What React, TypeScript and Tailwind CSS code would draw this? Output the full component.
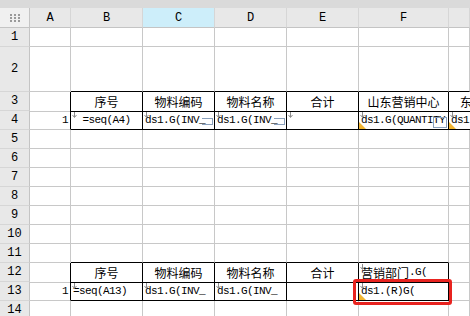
import React from "react";

const GRID = "grid grid-cols-[30px_41px_72px_72px_72px_72px_90px_1fr]";
const MONO = "font-['Liberation_Mono',monospace] text-[11px] tracking-[-0.6px] text-black";
const CJK = "font-['Noto_Sans_CJK_SC',sans-serif] text-[12px] text-black";

type CellProps = {
    children?: React.ReactNode;
    r?: boolean;
    b?: boolean;
    align?: "left" | "center" | "right";
    arrow?: boolean;
    tri?: boolean;
    box?: "sm" | "lg";
    red?: boolean;
};

function Arrow() {
    return (
        <svg className="absolute left-[1px] top-[1px]" width="5" height="6" viewBox="0 0 5 6">
            <line x1="2.5" y1="0" x2="2.5" y2="5" stroke="#8c8c8c" strokeWidth="1" />
            <path d="M0.5 3 L2.5 5.5 L4.5 3" fill="none" stroke="#8c8c8c" strokeWidth="1" />
        </svg>
    );
}

function Cell({ children, r, b, align = "left", arrow, tri, box, red }: CellProps) {
    const justify =
        align === "center" ? "justify-center" : align === "right" ? "justify-end" : "justify-start";
    return (
        <div
            className={`relative flex items-center border-r border-b ${justify} ${
                r ? "border-r-black" : "border-r-[#c8c8c8]"
            } ${b ? "border-b-black" : "border-b-[#c8c8c8]"}`}
        >
            <div className={`flex w-full overflow-hidden whitespace-nowrap px-[2px] pt-[1px] ${justify}`}>
                {children}
            </div>
            {arrow && <Arrow />}
            {tri && (
                <div className="absolute bottom-0 left-0 h-0 w-0 border-t-[7px] border-r-[7px] border-t-transparent border-r-transparent border-b-0 border-l-[7px] border-l-[#f2b632]" />
            )}
            {box === "sm" && (
                <div className="absolute bottom-[4px] right-[1px] h-[7px] w-[11px] border border-[#8aa0bc] border-l-0" />
            )}
            {box === "lg" && (
                <div className="absolute bottom-[1px] right-[1px] h-[11px] w-[14px] border border-[#8aa0bc]" />
            )}
            {red && (
                <div className="absolute left-[-6px] top-[-3px] z-10 h-[26px] w-[99px] rounded-[3px] border-[3px] border-[#e8231f]" />
            )}
        </div>
    );
}

function RowHead({ n, h }: { n: number; h: string }) {
    return (
        <div
            className={`${h} flex items-center justify-center border-r border-b border-r-[#c4c4c4] border-b-[#d6d6d6] bg-[#e8e8e8] font-['Liberation_Mono',monospace] text-[12px] text-black`}
        >
            {n}
        </div>
    );
}

const Mono = ({ t }: { t: string }) => <span className={MONO}>{t}</span>;
const Zh = ({ t }: { t: string }) => <span className={CJK}>{t}</span>;

export default function App() {
    const letters = ["A", "B", "C", "D", "E", "F", ""];
    const blank = (n: number, tableBottom = false, cols = 6) => (
        <div className={`${GRID} h-[19px]`} key={n}>
            <RowHead n={n} h="h-[19px]" />
            <Cell />
            {[0, 1, 2, 3, 4, 5].map((i) => (
                <Cell key={i} b={tableBottom && i < cols} />
            ))}
        </div>
    );

    return (
        <div className="h-[316px] w-[470px] overflow-hidden bg-white">
            <div className="h-[8px] bg-[#dadada]" />

            {/* column header */}
            <div className={`${GRID} h-[20px]`}>
                <div className="flex items-center justify-center border-r border-b border-r-[#c4c4c4] border-b-[#c4c4c4] bg-[#f0f0f0]">
                    <svg width="10" height="8" viewBox="0 0 10 8">
                        {[0, 1, 2].map((y) =>
                            [0, 1, 2].map((x) => (
                                <rect key={`${x}${y}`} x={x * 4} y={y * 3} width="2" height="2" fill="#9a9a9a" />
                            ))
                        )}
                    </svg>
                </div>
                {letters.map((l, i) => (
                    <div
                        key={i}
                        className={`flex items-center justify-center border-r border-b border-r-[#d6d6d6] border-b-[#c4c4c4] font-['Liberation_Mono',monospace] text-[12px] text-black ${
                            l === "C" ? "bg-[#cdeefa]" : "bg-[#e8e8e8]"
                        }`}
                    >
                        {l}
                    </div>
                ))}
            </div>

            {blank(1)}

            <div className={`${GRID} h-[45px]`}>
                <RowHead n={2} h="h-[45px]" />
                <Cell />
                {[0, 1, 2, 3, 4, 5].map((i) => (
                    <Cell key={i} b />
                ))}
            </div>

            {/* row 3 */}
            <div className={`${GRID} h-[19px]`}>
                <RowHead n={3} h="h-[19px]" />
                <Cell r />
                <Cell r b align="center"><Zh t="序号" /></Cell>
                <Cell r b align="center"><Zh t="物料编码" /></Cell>
                <Cell r b align="center"><Zh t="物料名称" /></Cell>
                <Cell r b align="center"><Zh t="合计" /></Cell>
                <Cell r b align="center"><Zh t="山东营销中心" /></Cell>
                <Cell b><span className={`${CJK} pl-[9px]`}>东营销中心</span></Cell>
            </div>

            {/* row 4 */}
            <div className={`${GRID} h-[19px]`}>
                <RowHead n={4} h="h-[19px]" />
                <Cell r align="right"><Mono t="1" /></Cell>
                <Cell r b align="center" arrow><Mono t="=seq(A4)" /></Cell>
                <Cell r b arrow box="sm"><Mono t="ds1.G(INV_" /></Cell>
                <Cell r b arrow box="sm"><Mono t="ds1.G(INV_" /></Cell>
                <Cell r b arrow />
                <Cell r b arrow tri box="lg"><Mono t="ds1.G(QUANTITY" /></Cell>
                <Cell b arrow tri><Mono t="ds1.G(QUANTITY" /></Cell>
            </div>

            {[5, 6, 7, 8, 9, 10].map((n) => blank(n))}
            {blank(11, true, 5)}

            {/* row 12 */}
            <div className={`${GRID} h-[19px]`}>
                <RowHead n={12} h="h-[19px]" />
                <Cell r />
                <Cell r b align="center"><Zh t="序号" /></Cell>
                <Cell r b align="center"><Zh t="物料编码" /></Cell>
                <Cell r b align="center"><Zh t="物料名称" /></Cell>
                <Cell r b align="center"><Zh t="合计" /></Cell>
                <Cell r b arrow>
                    <Zh t="营销部门" />
                    <Mono t=".G(" />
                </Cell>
                <Cell />
            </div>

            {/* row 13 */}
            <div className={`${GRID} h-[19px]`}>
                <RowHead n={13} h="h-[19px]" />
                <Cell r align="right"><Mono t="1" /></Cell>
                <Cell r b arrow><Mono t="=seq(A13)" /></Cell>
                <Cell r b arrow><Mono t="ds1.G(INV_" /></Cell>
                <Cell r b arrow><Mono t="ds1.G(INV_" /></Cell>
                <Cell r b />
                <Cell r b arrow tri red><Mono t="ds1.(R)G(" /></Cell>
                <Cell />
            </div>

            {blank(14)}
        </div>
    );
}
